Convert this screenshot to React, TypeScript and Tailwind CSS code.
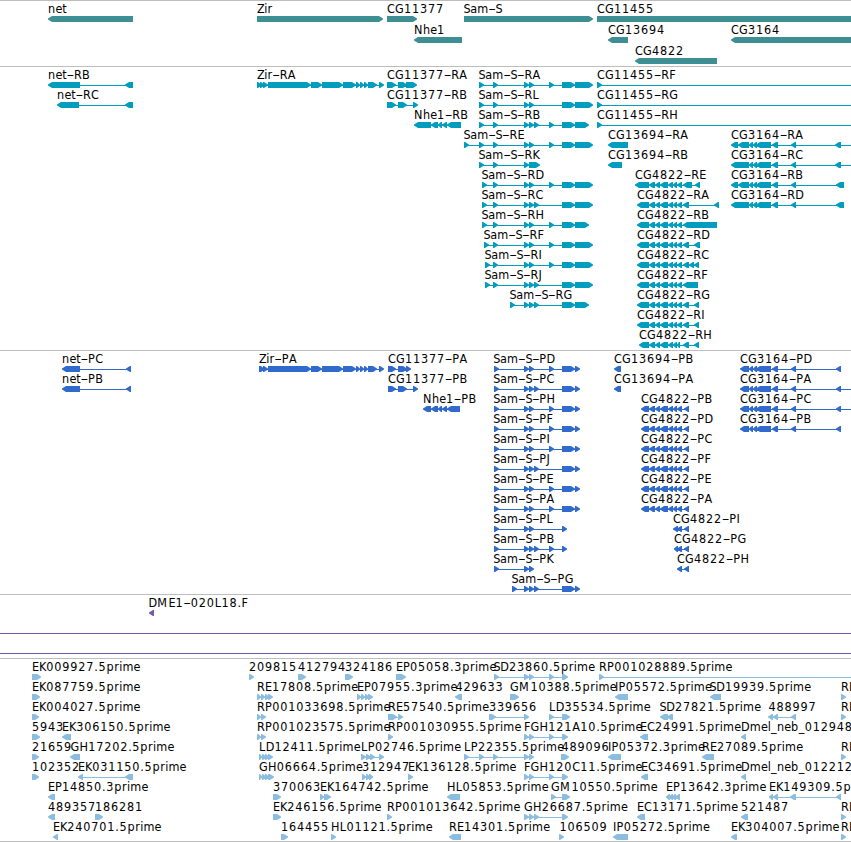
type Direction = "l" | "r";

/** [row, direction, start, label, exons, optional x at which the backbone ends] */
type Feature = [number, Direction, number, string, string, number?];

const ADVANCE: Record<string, number> = {
  A: 8, B: 7.2, C: 8, D: 8.7, E: 6.9, F: 6.5, G: 9, H: 8.7, I: 3.5, J: 4, K: 7.4, L: 6.7,
  M: 11.4, N: 9, P: 7.2, R: 8, S: 6.7, Z: 7.3, a: 7, b: 7.6, e: 6.8, h: 7.2, i: 3.2, l: 3.2,
  m: 11.2, n: 7.4, p: 7.8, r: 5, t: 4.6, "-": 7.2, ".": 4.1, _: 6,
};

const advance = (ch: string) => ADVANCE[ch] ?? 8;

function Label({ x, y, text }: { x: number; y: number; text: string }) {
  let pen = x;
  const runs: { text: string; xs: number[] }[] = [];
  for (const part of text.split(/(-)/)) {
    const xs: number[] = [];
    for (const ch of part) {
      xs.push(pen);
      pen += advance(ch);
    }
    runs.push({ text: part, xs });
  }
  return (
    <text y={y} className="fill-black text-[12.5px]">
      {runs.map((run, i) =>
        run.text === "-" ? (
          <tspan key={i} x={run.xs[0] - 0.2} y={y} textLength={7.8} lengthAdjust="spacingAndGlyphs">
            -
          </tspan>
        ) : (
          <tspan key={i} x={run.xs.join(" ")} y={y}>
            {run.text}
          </tspan>
        ),
      )}
    </text>
  );
}

function exonPath(a: number, b: number, y: number, direction: Direction) {
  const tip = Math.min(5, b - a);
  return direction === "r"
    ? `M${a} ${y}H${b - tip + 1}L${b} ${y + 2.4}V${y + 3.6}L${b - tip + 1} ${y + 6}H${a}Z`
    : `M${b} ${y}H${a + tip - 1}L${a} ${y + 2.4}V${y + 3.6}L${a + tip - 1} ${y + 6}H${b}Z`;
}

function Glyph({ feature, pitch }: { feature: Feature; pitch: number }) {
  const [row, direction, start, label, spec, end] = feature;
  const exons = spec.split(" ").map((pair) => {
    const [a, b] = pair.split("-").map(Number);
    return [a, b ?? a + 5];
  });
  const top = row * pitch;
  const first = exons[0][0];
  const last = end ?? exons[exons.length - 1][1];
  return (
    <g>
      <rect x={first + 1} y={top + 18} width={last - first - 2} height={1} />
      <path d={exons.map(([a, b]) => exonPath(a, b, top + 15, direction)).join("")} />
      <Label x={start} y={top + 12} text={label} />
    </g>
  );
}

function Track({ features, pitch = 20, tone, size }: {
  features: Feature[];
  pitch?: number;
  tone: string;
  size: string;
}) {
  return (
    <section className={`w-full shrink-0 border-t border-[#bebebe] ${size}`}>
      <svg className={`block h-full w-full overflow-visible ${tone}`}>
        {features.map((feature, i) => (
          <Glyph key={i} feature={feature} pitch={pitch} />
        ))}
      </svg>
    </section>
  );
}

const genes: Feature[] = [
  [0, "l", 48, "net", "48-133"],
  [0, "r", 257, "Zir", "257-383"],
  [0, "r", 387, "CG11377", "387-417"],
  [0, "r", 463.5, "Sam-S", "464-593"],
  [0, "r", 597, "CG11455", "597-870"],
  [1, "l", 414, "Nhe1", "414-462"],
  [1, "l", 608, "CG13694", "608-628"],
  [1, "l", 731, "CG3164", "731-870"],
  [2, "l", 635, "CG4822", "635-717"],
];

const zir = "260-264 263-268 268-311 311-322 322-343 343-356 356-360 360-364 364-368 368-377 379-384";
const samEnd = "562-575 575-593";
const cg4822 = "649-655 655-660 660-668 668-673 673-677 677-682";
const cg3164 = "749-753 753-757 756-771 772-778 791-796";

const transcripts: Feature[] = [
  [0, "l", 48, "net-RB", "48-80 125-133"],
  [1, "l", 57, "net-RC", "57-79 125-133"],
  [0, "r", 257, "Zir-RA", `257-261 ${zir}`],
  [0, "r", 387, "CG11377-RA", "387-396 398-407 406-417"],
  [1, "r", 387, "CG11377-RB", "387-396 398-407 413-418"],
  [2, "l", 414, "Nhe1-RB", "414-431 431-438 438-442 442-447 447-461"],
  [0, "r", 478.5, "Sam-S-RA", `479 493 524 529 549 ${samEnd}`],
  [1, "r", 478.5, "Sam-S-RL", `479 493 524 529 ${samEnd}`],
  [2, "r", 478.5, "Sam-S-RB", "479 493 524 529 534 549 562-575 575-589"],
  [3, "r", 463.5, "Sam-S-RE", `464 479 493 524 529 549 ${samEnd}`],
  [4, "r", 478.5, "Sam-S-RK", "479 493 524 529-540"],
  [5, "r", 481.5, "Sam-S-RD", `482 493 524 529 549 ${samEnd}`],
  [6, "r", 481.5, "Sam-S-RC", `482 493 524 529 534 ${samEnd}`],
  [7, "r", 481.5, "Sam-S-RH", "482 493 524 529 549 562-575 575-589"],
  [8, "r", 483.5, "Sam-S-RF", `484 493 524 529 549 ${samEnd}`],
  [9, "r", 484.5, "Sam-S-RI", `485 493 524 529 549 ${samEnd}`],
  [10, "r", 484.5, "Sam-S-RJ", `485 493 524 529 534 ${samEnd}`],
  [11, "r", 509.5, "Sam-S-RG", "510 524 529 534 562-575 575-589"],
  [0, "r", 597, "CG11455-RF", "597", 870],
  [1, "r", 597, "CG11455-RG", "597", 870],
  [2, "r", 597, "CG11455-RH", "597", 870],
  [3, "l", 608, "CG13694-RA", "608-628"],
  [4, "l", 608, "CG13694-RB", "608-622"],
  [5, "l", 635, "CG4822-RE", `635-649 ${cg4822} 683-692 695-700`],
  [6, "l", 637, "CG4822-RA", `637-649 ${cg4822} 683-689 714-719`],
  [7, "l", 637, "CG4822-RB", `637-649 ${cg4822} 683-717`],
  [8, "l", 637, "CG4822-RD", `637-649 ${cg4822} 683-689 694-700`],
  [9, "l", 637, "CG4822-RC", `637-649 ${cg4822} 683-689 689-694 694-699`],
  [10, "l", 637, "CG4822-RF", `637-649 ${cg4822} 683-698`],
  [11, "l", 637, "CG4822-RG", `637-649 ${cg4822} 683-689 694-699`],
  [12, "l", 637, "CG4822-RI", `637-649 ${cg4822} 683-689 694-699`],
  [13, "l", 639, "CG4822-RH", "639-649 649-655 655-660 660-668 668-673 673-677 677-680 683-689 694-699"],
  [3, "l", 731, "CG3164-RA", `731-738 738-749 ${cg3164} 835-841`, 870],
  [4, "l", 731, "CG3164-RC", `731-749 ${cg3164} 835-841`, 870],
  [5, "l", 731, "CG3164-RB", `731-738 738-749 ${cg3164} 836-844`],
  [6, "l", 731, "CG3164-RD", `731-749 ${cg3164} 836-844`],
];

const samLong = "494 524 529 549 562-575 575-580";
const samAlt = "494 524 529 534 562-575 575-580";
const cg4822cds = `641-649 ${cg4822} 684-689`;

const proteins: Feature[] = [
  [0, "l", 62, "net-PC", "62-80 126-131"],
  [1, "l", 62, "net-PB", "62-80 126-131"],
  [0, "r", 259, "Zir-PA", `259-262 ${zir}`],
  [0, "r", 388, "CG11377-PA", "388-396 398-407 406-411"],
  [1, "r", 388, "CG11377-PB", "388-396 398-407 413-418"],
  [2, "l", 423, "Nhe1-PB", "423-431 431-438 438-442 442-447 447-460"],
  [0, "r", 493.3, "Sam-S-PD", samLong],
  [1, "r", 493.3, "Sam-S-PC", samAlt],
  [2, "r", 493.3, "Sam-S-PH", samLong],
  [3, "r", 493.3, "Sam-S-PF", samLong],
  [4, "r", 493.3, "Sam-S-PI", samLong],
  [5, "r", 493.3, "Sam-S-PJ", samAlt],
  [6, "r", 493.3, "Sam-S-PE", samLong],
  [7, "r", 493.3, "Sam-S-PA", samLong],
  [8, "r", 493.3, "Sam-S-PL", "494 524 529 562"],
  [9, "r", 493.3, "Sam-S-PB", "494 524 529 534 549 562"],
  [10, "r", 493.3, "Sam-S-PK", "494 524 529"],
  [11, "r", 511.5, "Sam-S-PG", "512 524 529 534 562-575 575-580"],
  [0, "l", 614, "CG13694-PB", "614-621"],
  [1, "l", 614, "CG13694-PA", "614-621"],
  [2, "l", 641, "CG4822-PB", cg4822cds],
  [3, "l", 641, "CG4822-PD", cg4822cds],
  [4, "l", 641, "CG4822-PC", cg4822cds],
  [5, "l", 641, "CG4822-PF", cg4822cds],
  [6, "l", 641, "CG4822-PE", cg4822cds],
  [7, "l", 641, "CG4822-PA", cg4822cds],
  [8, "l", 673, "CG4822-PI", "673-678 677-682 684-689"],
  [9, "l", 674, "CG4822-PG", "674-678 677-682 684-689"],
  [10, "l", 677, "CG4822-PH", "677-682 684-689"],
  [0, "l", 740, "CG3164-PD", `740-749 ${cg3164} 836-841`],
  [1, "l", 740, "CG3164-PA", `740-749 ${cg3164} 836-841`, 870],
  [2, "l", 740, "CG3164-PC", `740-749 ${cg3164} 836-841`, 870],
  [3, "l", 740, "CG3164-PB", `740-749 ${cg3164} 836-841`],
];

const clones: Feature[] = [[0, "l", 148.5, "DME1-020L18.F", "149-154"]];

const ests: Feature[] = [
  [0, "r", 32, "EK009927.5prime", "32-41"],
  [0, "r", 249, "209815", "249"],
  [0, "r", 298, "412794", "298-306"],
  [0, "r", 345, "324186", "345-353"],
  [0, "r", 396, "EP05058.3prime", "396-406"],
  [0, "r", 493.5, "SD23860.5prime", "494 524 529 549 562-568"],
  [0, "r", 599, "RP001028889.5prime", "599", 870],
  [1, "r", 32, "EK087759.5prime", "32-40"],
  [1, "r", 257, "RE17808.5prime", "257-261 261-265 265-269 268-273"],
  [1, "r", 357, "EP07955.3prime", "357-361 361-365 365-369 368-373"],
  [1, "l", 455.5, "429633", "455-462"],
  [1, "r", 510, "GM10388.5prime", "510-519"],
  [1, "l", 615, "IP05572.5prime", "615-628"],
  [1, "l", 709.5, "SD19939.5prime", "710-721"],
  [1, "r", 841, "RE", "841"],
  [2, "r", 32, "EK004027.5prime", "32-39"],
  [2, "r", 257, "RP001033698.5prime", "257-261 261-266"],
  [2, "r", 388, "RE57540.5prime", "388-397 398-403"],
  [2, "r", 489, "339656", "489-496 524-529"],
  [2, "r", 549, "LD35534.5prime", "549 562-570"],
  [2, "l", 659.5, "SD27821.5prime", "660-668 667-673"],
  [2, "l", 768.5, "488997", "768-773 773-778 791-796"],
  [2, "r", 841, "RE", "841"],
  [3, "r", 32, "5943", "32-40"],
  [3, "l", 62, "EK306150.5prime", "62-71"],
  [3, "r", 257, "RP001023575.5prime", "257-261 261-266"],
  [3, "r", 388, "RP001030955.5prime", "388"],
  [3, "r", 524, "FGH121A10.5prime", "524 529 549 562-568"],
  [3, "l", 640, "EC24991.5prime", "640-648"],
  [3, "l", 741, "Dmel_neb_012948", "741-746"],
  [4, "r", 32, "21659", "32-39"],
  [4, "l", 70.5, "GH17202.5prime", "70-80"],
  [4, "r", 259, "LD12411.5prime", "259-262 262-266 265-269 268-273"],
  [4, "r", 361, "LP02746.5prime", "361-366 366-371 370-375 379-384"],
  [4, "r", 464, "LP22355.5prime", "464 479 493 524 529"],
  [4, "r", 561.5, "489096", "561-569"],
  [4, "l", 608, "IP05372.3prime", "608-621"],
  [4, "l", 702, "RE27089.5prime", "702-714"],
  [4, "r", 841, "RE", "841"],
  [5, "r", 32, "102352", "32-39"],
  [5, "l", 78, "EK031150.5prime", "78-83 125-133"],
  [5, "r", 259, "GH06664.5prime", "259-262 262-266 265-269 268-274"],
  [5, "r", 362, "312947", "362-366 366-370 369-373"],
  [5, "r", 408, "EK136128.5prime", "408"],
  [5, "r", 524, "FGH120C11.5prime", "524 529 549 562-568"],
  [5, "l", 641, "EC34691.5prime", "641-648"],
  [5, "l", 741, "Dmel_neb_012212", "741-746"],
  [6, "l", 48, "EP14850.3prime", "48-55"],
  [6, "r", 273, "370063", "273-281"],
  [6, "r", 320, "EK164742.5prime", "320-324 324-328 326-331"],
  [6, "l", 447, "HL05853.5prime", "447-460"],
  [6, "r", 551, "GM10550.5prime", "551 562-570"],
  [6, "l", 666, "EP13642.3prime", "666-670 669-673 672-676 675-680"],
  [6, "l", 769, "EK149309.5prime", "769-773 773-778 790-796 836-841"],
  [7, "l", 48, "489357", "48-55"],
  [7, "r", 95, "186281", "95-103"],
  [7, "r", 273, "EK246156.5prime", "273-281"],
  [7, "r", 387, "RP001013642.5prime", "387"],
  [7, "r", 524, "GH26687.5prime", "524 529 534 562-568"],
  [7, "l", 637, "EC13171.5prime", "637-645"],
  [7, "l", 741, "521487", "741-748"],
  [7, "r", 841, "RE", "841"],
  [8, "l", 53, "EK240701.5prime", "53-58"],
  [8, "r", 281, "164455", "281-288"],
  [8, "r", 331, "HL01121.5prime", "331"],
  [8, "l", 449, "RE14301.5prime", "449-461"],
  [8, "r", 559.5, "106509", "559-564"],
  [8, "l", 613, "IP05272.5prime", "613-628"],
  [8, "l", 731, "EK304007.5prime", "731-737"],
  [8, "r", 841, "RE", "841"],
];

export default function App() {
  return (
    <main className="flex h-[842px] w-[851px] flex-col overflow-hidden border-b border-[#bebebe] bg-white font-['DejaVu_Sans_Condensed','DejaVu_Sans',sans-serif]">
      <Track features={genes} pitch={21} tone="fill-[#3e8f94]" size="h-[66px]" />
      <Track features={transcripts} tone="fill-[#009dbf]" size="h-[284px]" />
      <Track features={proteins} tone="fill-[#306acc]" size="h-[244px]" />
      <Track features={clones} tone="fill-[#755aa8]" size="h-[39px]" />
      <div className="h-[21px] shrink-0 border-y border-[#755aa8]" />
      <div className="h-1 shrink-0" />
      <Track features={ests} tone="fill-[#8abddf]" size="h-[183px]" />
    </main>
  );
}
